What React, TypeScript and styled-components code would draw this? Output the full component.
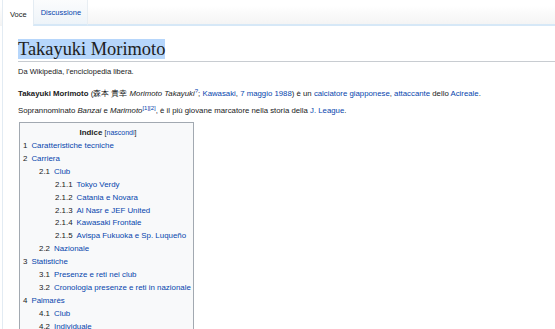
import styled, { createGlobalStyle } from "styled-components";

const GlobalStyle = createGlobalStyle`
    body {
        margin: 0;
        background: #ffffff;
        font-family: "Liberation Sans", Arial, sans-serif;
        color: #202122;
    }
`;

const Page = styled.div`
    width: 555px;
    height: 329px;
    overflow: hidden;
    display: flex;
    flex-direction: column;
`;

const TabBar = styled.div`
    display: flex;
    flex-shrink: 0;
    height: 26px;
    padding-left: 2px;
    background: linear-gradient(to bottom, #ffffff 0%, #ffffff 20%, #f3f3f3 100%);
`;

const Tab = styled.div<{ $active?: boolean }>`
    display: flex;
    align-items: flex-end;
    padding: 0 6px 7px 7px;
    font-size: 7.5px;
    border-left: 1px solid #e4ecf3;
    color: ${(p) => (p.$active ? "#202122" : "#0645ad")};
    background: ${(p) =>
        p.$active
            ? "#ffffff"
            : "linear-gradient(to bottom, #fbfcfd 0%, #eef4f9 100%)"};
    border-bottom: ${(p) => (p.$active ? "none" : "2px solid #d6e8f7")};
`;

const Filler = styled.div`
    flex: 1;
    border-left: 1px solid #e8eef3;
    border-bottom: 2px solid #d6e8f7;
`;

const Content = styled.div`
    flex: 1 0 auto;
    margin-left: 2px;
    border-left: 1px solid #e2ebf3;
    padding: 12px 0 0 15px;
`;

const Title = styled.h1`
    margin: 0;
    font-family: "Liberation Serif", "DejaVu Serif", serif;
    font-weight: normal;
    font-size: 18.4px;
    line-height: 22px;
    border-bottom: 1px solid #c8ccd1;
    padding-bottom: 1px;

    & span {
        background: #b6d6fb;
    }
`;

const Tagline = styled.div`
    margin-top: 4px;
    font-size: 7.5px;
    line-height: 12px;
`;

const Para = styled.p`
    margin: 0;
    font-size: 7.8px;
    line-height: 13px;
    padding: 2px 0;
    white-space: nowrap;

    &:first-of-type {
        margin-top: 7px;
    }
`;

const Link = styled.a`
    color: #0645ad;
    text-decoration: none;
`;

const Sup = styled.sup`
    font-size: 6px;
    line-height: 0;
    vertical-align: 3px;
`;

const Toc = styled.div`
    margin-top: 3px;
    margin-left: 1px;
    width: 170px;
    border: 1px solid #a2a9b1;
    background: #f8f9fa;
    padding: 3px 0 0 3px;
    font-size: 7.9px;
    white-space: nowrap;
`;

const TocTitle = styled.div`
    text-align: center;
    line-height: 13px;
    margin-bottom: 1px;

    & b {
        font-weight: bold;
    }

    & span {
        font-size: 7px;
    }
`;

const TocRow = styled.div<{ $level: number }>`
    display: flex;
    line-height: 12.9px;
    padding-left: ${(p) => (p.$level - 1) * 16}px;
`;

const TocNum = styled.span`
    color: #202122;
    padding-right: 4px;
`;

const toc: [number, string, string][] = [
    [1, "1", "Caratteristiche tecniche"],
    [1, "2", "Carriera"],
    [2, "2.1", "Club"],
    [3, "2.1.1", "Tokyo Verdy"],
    [3, "2.1.2", "Catania e Novara"],
    [3, "2.1.3", "Al Nasr e JEF United"],
    [3, "2.1.4", "Kawasaki Frontale"],
    [3, "2.1.5", "Avispa Fukuoka e Sp. Luqueño"],
    [2, "2.2", "Nazionale"],
    [1, "3", "Statistiche"],
    [2, "3.1", "Presenze e reti nei club"],
    [2, "3.2", "Cronologia presenze e reti in nazionale"],
    [1, "4", "Palmarès"],
    [2, "4.1", "Club"],
    [2, "4.2", "Individuale"],
];

export default function App() {
    return (
        <Page>
            <GlobalStyle />
            <TabBar>
                <Tab $active>Voce</Tab>
                <Tab>Discussione</Tab>
                <Filler />
            </TabBar>
            <Content>
                <Title>
                    <span>Takayuki Morimoto</span>
                </Title>
                <Tagline>Da Wikipedia, l'enciclopedia libera.</Tagline>
                <Para>
                    <b>Takayuki Morimoto</b> (森本 貴幸 <i>Morimoto Takayuki</i>
                    <Sup>
                        <Link>?</Link>
                    </Sup>
                    ; <Link>Kawasaki</Link>, <Link>7 maggio</Link>{" "}
                    <Link>1988</Link>) è un <Link>calciatore</Link>{" "}
                    <Link>giapponese</Link>, <Link>attaccante</Link> dello{" "}
                    <Link>Acireale</Link>.
                </Para>
                <Para>
                    Soprannominato <i>Banzai</i> e <i>Marimoto</i>
                    <Sup>
                        <Link>[1]</Link>
                        <Link>[2]</Link>
                    </Sup>
                    , è il più giovane marcatore nella storia della{" "}
                    <Link>J. League</Link>.
                </Para>
                <Toc>
                    <TocTitle>
                        <b>Indice</b> <span>[<Link>nascondi</Link>]</span>
                    </TocTitle>
                    {toc.map(([level, num, label]) => (
                        <TocRow key={num} $level={level}>
                            <TocNum>{num}</TocNum>
                            <Link>{label}</Link>
                        </TocRow>
                    ))}
                </Toc>
            </Content>
        </Page>
    );
}
